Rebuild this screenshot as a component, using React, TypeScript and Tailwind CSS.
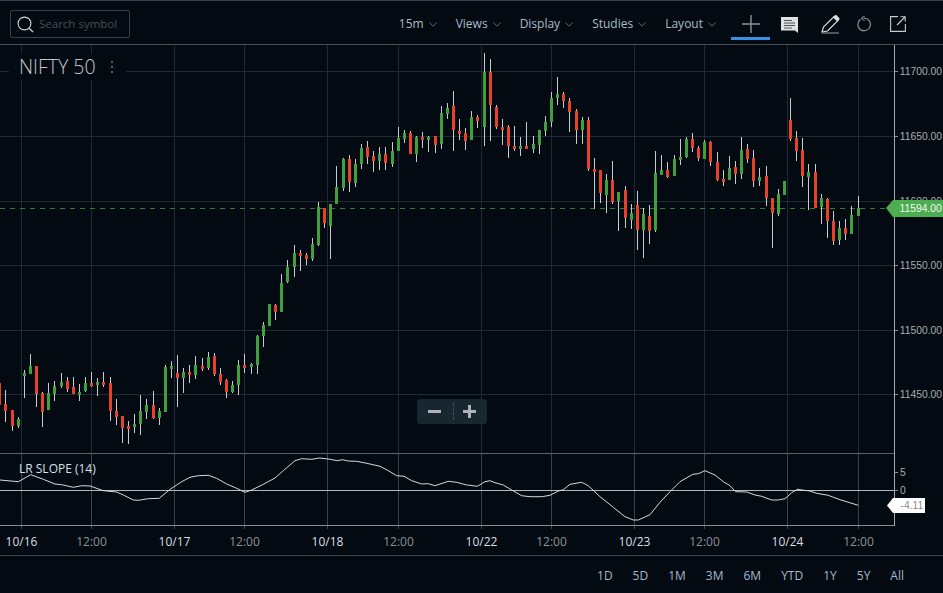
import React from "react";

type Candle = [number, number, number, number, number, "g" | "r"];

// x, high, low, body top, body bottom, colour (page pixels)
const candles: Candle[] = [
  [-1, 383, 405, 383, 405, "r"], [5, 390, 422, 404, 411, "r"], [12, 410, 431, 410, 426, "r"], [18, 417, 428, 419, 426, "g"],
  [24, 370, 398, 373, 376, "g"], [30, 354, 374, 366, 374, "g"], [36, 366, 407, 366, 394, "r"], [42, 392, 427, 393, 412, "r"],
  [48, 383, 410, 393, 410, "g"], [54, 381, 401, 386, 394, "g"], [61, 373, 388, 382, 386, "g"], [67, 377, 392, 381, 389, "r"],
  [73, 377, 394, 387, 394, "r"], [79, 384, 401, 392, 395, "g"], [85, 377, 392, 383, 391, "g"], [91, 372, 387, 383, 386, "r"],
  [97, 378, 396, 382, 385, "g"], [103, 372, 387, 382, 385, "r"], [110, 377, 421, 383, 411, "r"], [116, 399, 425, 411, 417, "r"],
  [122, 416, 443, 416, 428, "r"], [128, 421, 444, 426, 429, "r"], [134, 414, 433, 424, 427, "g"], [140, 395, 435, 411, 424, "g"],
  [146, 399, 419, 405, 412, "g"], [153, 391, 419, 405, 418, "r"], [159, 408, 425, 411, 418, "g"], [165, 365, 412, 367, 412, "g"],
  [171, 361, 378, 366, 369, "g"], [177, 355, 407, 373, 378, "r"], [183, 368, 393, 372, 378, "g"], [189, 365, 383, 372, 375, "r"],
  [195, 356, 379, 365, 375, "g"], [202, 358, 371, 366, 369, "r"], [208, 352, 370, 357, 368, "g"], [214, 353, 376, 356, 374, "r"],
  [220, 368, 385, 374, 382, "r"], [226, 379, 398, 380, 392, "r"], [232, 381, 393, 385, 392, "g"], [238, 360, 395, 365, 385, "g"],
  [244, 354, 373, 365, 368, "r"], [251, 363, 374, 364, 367, "g"], [257, 335, 374, 336, 365, "g"], [263, 322, 347, 325, 336, "g"],
  [269, 304, 326, 304, 326, "g"], [275, 304, 320, 305, 312, "r"], [281, 274, 312, 283, 312, "g"], [287, 260, 283, 267, 282, "g"],
  [294, 245, 277, 253, 267, "g"], [300, 250, 271, 253, 256, "r"], [306, 253, 265, 255, 259, "r"], [312, 238, 261, 244, 259, "g"],
  [318, 202, 246, 207, 245, "g"], [324, 208, 228, 208, 223, "r"], [330, 204, 259, 204, 226, "g"], [336, 166, 204, 187, 204, "g"],
  [343, 158, 191, 159, 188, "g"], [349, 155, 192, 159, 182, "r"], [355, 159, 187, 164, 183, "g"], [361, 144, 169, 148, 164, "g"],
  [367, 141, 164, 147, 157, "r"], [373, 151, 172, 156, 161, "r"], [379, 147, 170, 154, 161, "g"], [385, 147, 170, 154, 163, "r"],
  [392, 142, 167, 151, 164, "g"], [398, 127, 151, 138, 151, "g"], [404, 130, 143, 133, 139, "g"], [410, 131, 154, 133, 154, "r"],
  [416, 136, 162, 137, 154, "g"], [422, 132, 148, 137, 140, "r"], [428, 136, 152, 137, 140, "g"], [435, 136, 153, 136, 145, "r"],
  [441, 106, 149, 113, 144, "g"], [447, 103, 119, 108, 114, "g"], [453, 91, 151, 106, 130, "r"], [459, 119, 140, 131, 134, "r"],
  [465, 128, 150, 133, 141, "r"], [471, 111, 140, 117, 140, "g"], [477, 115, 128, 117, 121, "r"], [484, 53, 146, 72, 127, "g"],
  [490, 59, 141, 72, 105, "r"], [496, 105, 129, 107, 127, "r"], [502, 119, 145, 127, 130, "r"], [508, 125, 158, 127, 146, "r"],
  [514, 126, 151, 146, 149, "r"], [520, 137, 156, 146, 149, "g"], [526, 122, 149, 146, 149, "r"], [533, 136, 153, 144, 149, "g"],
  [539, 130, 154, 130, 145, "g"], [545, 116, 136, 122, 131, "g"], [551, 92, 127, 98, 122, "g"], [557, 77, 105, 94, 98, "g"],
  [563, 92, 108, 94, 101, "r"], [569, 98, 132, 101, 112, "r"], [576, 109, 144, 111, 130, "r"], [582, 117, 144, 120, 130, "g"],
  [588, 117, 171, 120, 169, "r"], [594, 158, 209, 169, 172, "r"], [600, 170, 203, 170, 193, "r"], [606, 174, 213, 180, 195, "g"],
  [612, 161, 204, 180, 202, "r"], [618, 192, 231, 192, 201, "g"], [625, 186, 228, 190, 218, "r"], [631, 204, 229, 213, 220, "g"],
  [637, 191, 250, 205, 230, "r"], [643, 208, 258, 214, 230, "g"], [649, 205, 244, 216, 231, "r"], [655, 151, 232, 173, 230, "g"],
  [661, 155, 175, 170, 175, "g"], [667, 162, 178, 170, 177, "r"], [674, 155, 176, 159, 176, "g"], [680, 139, 165, 157, 160, "g"],
  [686, 137, 158, 139, 157, "g"], [692, 133, 152, 139, 148, "r"], [698, 146, 161, 148, 158, "r"], [704, 140, 159, 142, 159, "g"],
  [710, 141, 166, 142, 162, "r"], [717, 152, 181, 162, 180, "r"], [723, 170, 186, 179, 182, "r"], [729, 156, 180, 168, 180, "g"],
  [735, 161, 184, 167, 174, "r"], [741, 137, 179, 150, 174, "g"], [747, 144, 163, 149, 159, "r"], [753, 150, 187, 158, 181, "r"],
  [759, 168, 186, 177, 181, "g"], [766, 166, 206, 176, 198, "r"], [772, 198, 248, 198, 213, "r"], [778, 189, 216, 194, 214, "g"],
  [784, 181, 195, 181, 195, "g"], [790, 98, 141, 120, 139, "r"], [796, 131, 161, 138, 151, "r"], [802, 138, 187, 150, 176, "r"],
  [808, 164, 210, 172, 177, "g"], [815, 164, 208, 172, 208, "r"], [821, 194, 224, 198, 207, "g"], [827, 198, 238, 199, 221, "r"],
  [833, 211, 245, 221, 241, "r"], [839, 221, 245, 228, 240, "g"], [845, 219, 240, 228, 234, "r"], [851, 206, 234, 215, 234, "g"],
  [858, 196, 216, 208, 216, "g"],
];

// zoom-crop coordinates of the LR slope line, scaled down below
const slopeLeft = [[0,105],[55,110],[92,89],[130,103],[165,117],[185,119],[220,127],[245,122],[270,123],[310,137],[350,141],[370,150],[400,165],[415,166],[445,161],[478,160],[510,133],[545,110],[570,97],[595,92],[625,91],[650,100],[680,117],[710,130],[735,142],[755,135],[790,118],[825,99],[850,77],[885,47],[905,41],[935,43],[958,39],[985,42],[1012,47],[1028,44],[1045,48],[1070,49],[1100,55],[1140,64],[1165,77],[1190,92],[1212,94],[1235,107],[1265,117],[1285,116],[1305,122],[1345,109],[1370,112],[1400,120]];
const slopeRight = [[0,121],[22,124],[45,110],[60,107],[75,113],[100,120],[125,135],[155,152],[180,155],[215,155],[240,151],[265,138],[280,134],[300,118],[335,112],[355,122],[390,155],[430,187],[465,215],[490,225],[505,225],[540,209],[570,172],[600,140],[630,110],[668,88],[685,86],[705,77],[735,90],[760,110],[780,122],[797,140],[830,141],[855,150],[875,154],[905,165],[925,165],[945,161],[965,143],[982,133],[1020,138],[1040,145],[1075,151],[1110,164],[1165,181]];
const slopePoints = [
  ...slopeLeft.map(([x, y]) => [x / 3, 445 + y / 3]),
  ...slopeRight.map(([x, y]) => [470 + x / 3, 445 + y / 3]),
].map(([x, y]) => x.toFixed(1) + "," + y.toFixed(1)).join(" ");

const gridX = [21, 91, 174, 244, 327, 398, 481, 551, 634, 704, 787, 858];
const gridY = [71, 136, 201, 265, 330, 394];
const prices = [["11700.00", 71], ["11650.00", 136], ["11600.00", 201], ["11550.00", 265], ["11500.00", 330], ["11450.00", 394]] as const;
const dates = [["10/16", 21, true], ["12:00", 91, false], ["10/17", 174, true], ["12:00", 244, false], ["10/18", 327, true], ["12:00", 398, false], ["10/22", 481, true], ["12:00", 551, false], ["10/23", 634, true], ["12:00", 704, false], ["10/24", 787, true], ["12:00", 858, false]] as const;

function Chevron() {
  return (
    <svg width="8" height="5" viewBox="0 0 8 5" className="ml-[5px] mt-[1px]">
      <path d="M0.4 0.5 L4 4.2 L7.6 0.5" fill="none" stroke="#5d6a74" strokeWidth="1" />
    </svg>
  );
}

function NavItem({ label, className }: { label: string; className: string }) {
  return (
    <div className={"flex items-center mt-[3px] text-[12px] text-[#a8bccb] " + className}>
      {label}
      <Chevron />
    </div>
  );
}

function Chart() {
  return (
    <svg viewBox="0 45 943 510" className="block w-full h-full" shapeRendering="crispEdges">
      {gridX.map((x) => <rect key={x} x={x} y={45} width={1} height={408} fill="#1e2b36" />)}
      {gridX.map((x) => <rect key={x} x={x} y={453} width={1} height={76} fill="#37434d" />)}
      {gridY.map((y) => <rect key={y} x={0} y={y} width={894} height={1} fill="#1e2b36" />)}
      {gridY.map((y) => <rect key={y} x={894} y={y} width={4} height={1} fill="#8a8f93" />)}

      <line x1={0} y1={208.5} x2={886} y2={208.5} stroke="#2f7d32" strokeDasharray="5 5" />

      {candles.map(([x, hi, lo, top, bot, c]) => (
        <g key={x}>
          <rect x={x} y={hi} width={1} height={lo - hi} fill="#c9cccd" />
          <rect x={x - 1} y={top} width={3} height={bot - top} fill={c === "g" ? "#40a040" : "#e8412a"} />
        </g>
      ))}

      <rect x={0} y={453} width={894} height={1} fill="#5a6167" />
      <rect x={0} y={490} width={894} height={1} fill="#b4b7b9" />
      <rect x={0} y={525} width={894} height={1} fill="#8b9094" />
      <rect x={894} y={45} width={1} height={481} fill="#a6a9ab" />
      <rect x={894} y={472} width={4} height={1} fill="#8a8f93" />
      <rect x={894} y={490} width={4} height={1} fill="#8a8f93" />

      <polyline points={slopePoints} fill="none" stroke="#d8dadb" strokeWidth="1" shapeRendering="auto" />

      <g className="text-[10.3px] [font-family:'Liberation_Sans',sans-serif]" shapeRendering="auto">
        {prices.map(([p, y]) => <text key={p} x={899.8} y={y + 4} fill="#a9adb0">{p}</text>)}
        <text x={900} y={476} fill="#a9adb0">5</text>
        <text x={900} y={494} fill="#a9adb0">0</text>
        <polygon points="886,208 893,200 943,200 943,217 893,217" fill="#4cae50" />
        <text x={899.5} y={212} fill="#f2f7f2">11594.00</text>
        <polygon points="887,505.5 893,498 925,498 925,513 893,513" fill="#ffffff" />
        <text x={900.5} y={509} fill="#8a8a8a">-4.11</text>
      </g>
      <g className="text-[12px]" shapeRendering="auto">
        {dates.map(([d, x, major], i) => (
          <text key={i} x={x + 0.5} y={546} textAnchor="middle" fill={major ? "#dcdfe1" : "#8e9396"}>{d}</text>
        ))}
      </g>
    </svg>
  );
}

export default function App() {
  return (
    <div className="flex flex-col w-full h-screen overflow-hidden bg-[#030a12] [font-family:'Open_Sans',sans-serif]">
      {/* Toolbar */}
      <header className="flex items-center h-[45px] shrink-0 border-t border-b border-t-[#3a3d40] border-b-[#4a4d50] pl-[10px] pr-[37px]">
        <div className="flex items-center w-[120px] h-[28px] border border-[#3c4147] rounded-[2px] pl-[6px] gap-[5px] mt-[3px] text-[11.5px] text-[#434e59]">
          <svg width="17" height="17" viewBox="0 0 17 17" fill="none" stroke="#d6d8da" strokeWidth="1.1">
            <circle cx="7.5" cy="7.5" r="6.4" />
            <path d="M12 12 L16 16" />
          </svg>
          Search symbol
        </div>
        <div className="flex items-center self-stretch ml-auto">
          <NavItem label="15m" className="" />
          <NavItem label="Views" className="ml-[19px]" />
          <NavItem label="Display" className="ml-[19px]" />
          <NavItem label="Studies" className="ml-[19px]" />
          <NavItem label="Layout" className="ml-[19px]" />
          <div className="flex justify-center w-[39px] h-[39px] ml-[15px] pt-[14px] border-b-[3px] border-[#3b8ee8] self-start">
            <svg width="18" height="18" viewBox="0 0 18 18" stroke="#8e9499" strokeWidth="1.4">
              <path d="M0 9 H18 M9 0 V18" />
            </svg>
          </div>
          <svg width="18" height="17" viewBox="0 0 18 17" className="ml-[11px] mt-[5px]">
            <path d="M0 0 H17 V16 L14 13.5 H0 Z" fill="#dfe1e2" />
            <path d="M3 3.5 H11 M3 6 H14 M3 8.5 H14 M3 11 H11" stroke="#4a5056" strokeWidth="1" />
          </svg>
          <svg width="19" height="19" viewBox="0 0 19 19" className="ml-[22px] mt-[3px]" fill="none" stroke="#e0e2e3" strokeWidth="1.1">
            <path d="M1 17 L2.5 12 L12.5 2 L16.5 6 L6.5 16 Z" />
            <path d="M13 1.5 L15 0.5 L18 3.5 L17 5.5 Z" fill="#e0e2e3" />
            <path d="M1 18 H18" stroke="#8e9499" />
          </svg>
          <svg width="16" height="16" viewBox="0 0 16 16" className="ml-[16px] mt-[3px]" fill="none" stroke="#84898d" strokeWidth="1.3">
            <path d="M4.4 3.4 A6.3 6.3 0 1 0 8 2.2" />
            <path d="M8.5 0 L5.5 2.3 L8.5 4.6" strokeWidth="1.1" />
          </svg>
          <svg width="16" height="16" viewBox="0 0 16 16" className="ml-[18px] mt-[2px]" fill="none" stroke="#c9cccd" strokeWidth="1.1">
            <path d="M8 0.6 H0.6 V15.4 H15.4 V8" />
            <path d="M7 9 L15 1 M10.5 0.8 H15.2 V5.5" />
          </svg>
        </div>
      </header>

      {/* Chart area */}
      <main className="relative h-[510px] shrink-0">
        <Chart />
        <div className="absolute left-[9px] top-[9px] flex items-center w-[117px] h-[26px] pl-[10px] pb-[1px] bg-[#030a12] text-[19.5px] font-light text-[#c4c7c9]">
          NIFTY 50
          <span className="ml-[15px] flex flex-col gap-[3px]">
            <i className="block w-[2px] h-[2px] rounded-full bg-[#777]" />
            <i className="block w-[2px] h-[2px] rounded-full bg-[#777]" />
            <i className="block w-[2px] h-[2px] rounded-full bg-[#777]" />
          </span>
        </div>
        <div className="absolute left-[19px] top-[415px] text-[12px] leading-[18px] text-[#d6e0e8]">LR SLOPE (14)</div>
        <div className="absolute left-[417px] top-[354px] flex items-center w-[70px] h-[25px] rounded-[3px] bg-[#1b2a33]/90">
          <div className="w-[35px] flex justify-center">
            <span className="block w-[13px] h-[3px] bg-[#aeb2b5]" />
          </div>
          <div className="ml-[1px] h-[17px] border-l border-dashed border-[#46535c]" />
          <svg width="13" height="13" viewBox="0 0 13 13" className="ml-[9px]">
            <path d="M0 5 H13 V8 H0 Z M5 0 H8 V13 H5 Z" fill="#aeb2b5" />
          </svg>
        </div>
      </main>

      {/* Range selector */}
      <footer className="flex flex-1 items-center justify-end gap-[20px] pr-[39px] pt-[2px] border-t border-[#3f4346] text-[12px] text-[#a3b8c8]">
        {["1D", "5D", "1M", "3M", "6M", "YTD", "1Y", "5Y", "All"].map((r) => <span key={r}>{r}</span>)}
      </footer>
    </div>
  );
}
